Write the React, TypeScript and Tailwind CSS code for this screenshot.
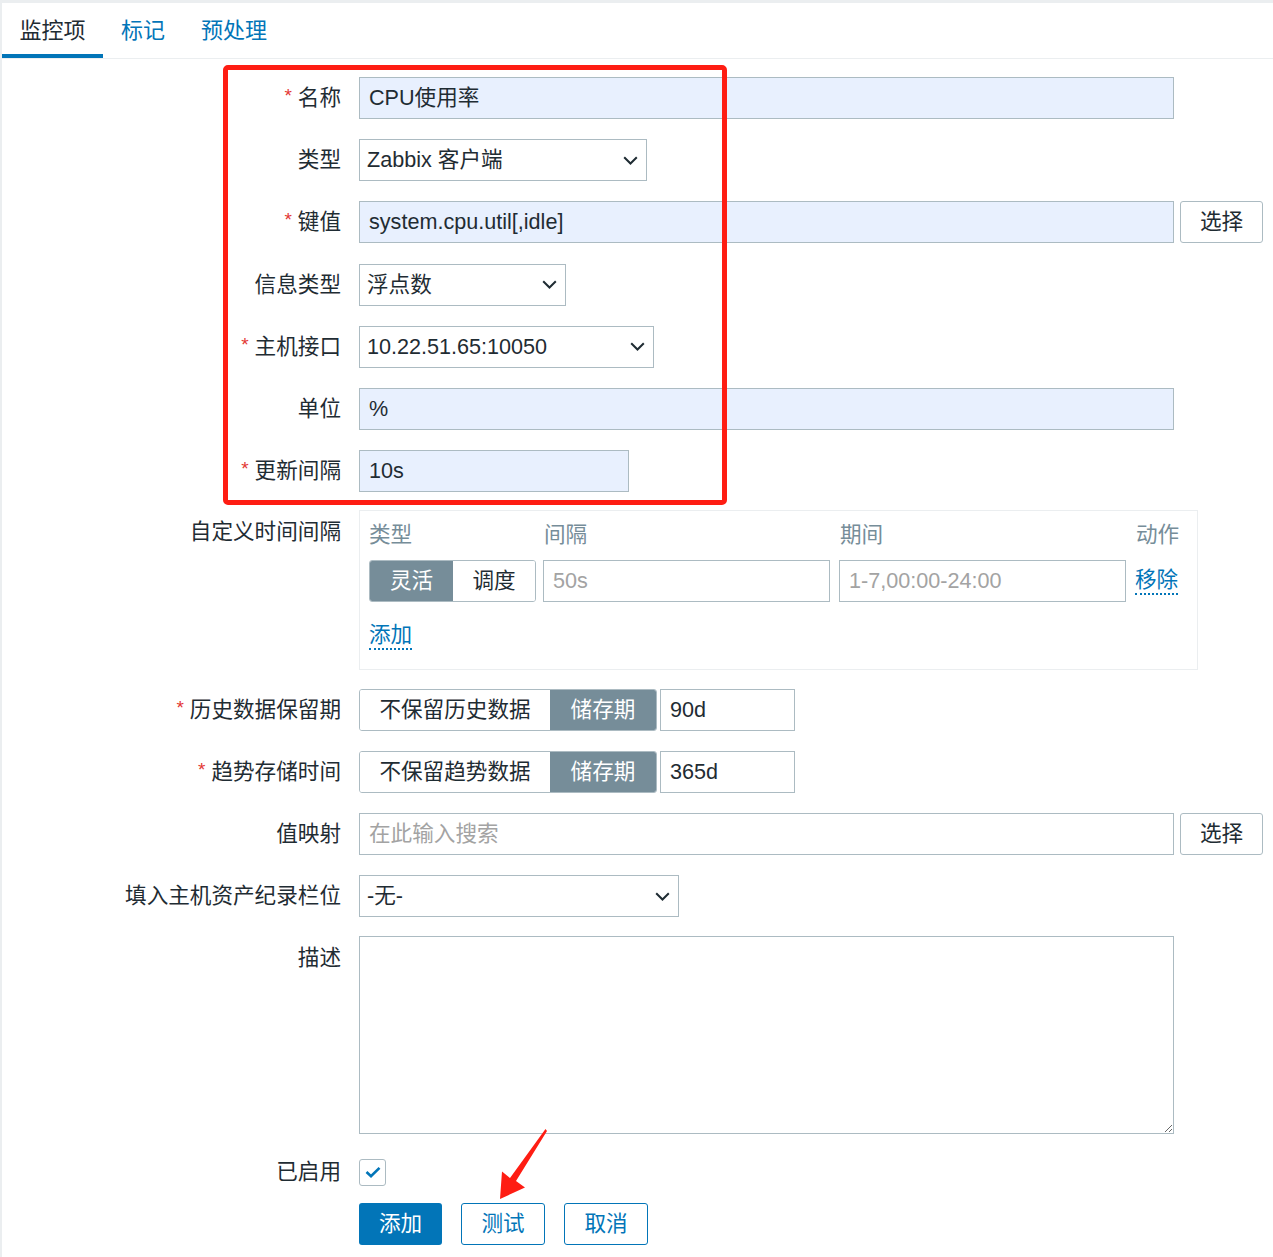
import React from "react";

const FONT = { fontFamily: '"Liberation Sans", Arial, "Noto Sans CJK SC", sans-serif' };

function Chevron() {
  return (
    <svg width="15" height="9" viewBox="0 0 15 9" className="shrink-0">
      <path d="M1.2 1.2 L7.5 7.5 L13.8 1.2" fill="none" stroke="#1f2c33" strokeWidth="2" />
    </svg>
  );
}

function Label({ text, req }: { text: string; req?: boolean }) {
  return (
    <div className="w-[339px] shrink-0 flex items-center justify-end h-[42px] text-[#1f2c33]">
      {req && <span className="text-[#e33734] text-[19px] mr-[6px] -mt-[4px]">*</span>}
      <span>{text}</span>
    </div>
  );
}

function Row({ label, req, children, top }: { label: string; req?: boolean; children: React.ReactNode; top?: boolean }) {
  return (
    <div className={`flex ${top ? "items-start" : "items-center"}`}>
      <Label text={label} req={req} />
      <div className="ml-[18px] flex items-center gap-[6px] flex-1">{children}</div>
    </div>
  );
}

function Input({ w, text, auto = true, placeholder }: { w: string; text?: string; auto?: boolean; placeholder?: string }) {
  return (
    <div
      className={`${w} h-[42px] border border-[#acbbc2] ${auto ? "bg-[#e8f0fe]" : "bg-white"} pl-[9px] flex items-center text-[#1f2c33] shrink-0`}
    >
      {text ? <span>{text}</span> : <span className="text-[#a3a3a3]">{placeholder}</span>}
    </div>
  );
}

function Select({ w, text }: { w: string; text: string }) {
  return (
    <div className={`${w} h-[42px] border border-[#acbbc2] bg-white pl-[7px] pr-[8px] flex items-center justify-between text-[#1f2c33] shrink-0`}>
      <span>{text}</span>
      <Chevron />
    </div>
  );
}

function PickBtn() {
  return (
    <div className="w-[83px] h-[42px] border border-[#acbbc2] rounded-[3px] bg-white flex items-center justify-center text-[#1f2c33] shrink-0">
      选择
    </div>
  );
}

export default function App() {
  return (
    <div className="min-h-[1257px] bg-[#ebeef0] pt-[3px] pl-[2px] relative" style={FONT}>
      <div className="bg-white min-h-[1254px] text-[21.6px] leading-[30px]">
        {/* tabs */}
        <div className="flex h-[56px] border-b border-[#ebeef0]">
          <div className="w-[101px] flex items-center justify-center text-[#1f2c33] border-b-[4px] border-[#0275b8] pt-[4px] text-[22px]">监控项</div>
          <div className="px-[18px] flex items-center text-[#0275b8] border-b-[4px] border-transparent pt-[4px] text-[22px]">标记</div>
          <div className="px-[18px] flex items-center text-[#0275b8] border-b-[4px] border-transparent pt-[4px] text-[22px]">预处理</div>
        </div>

        <div className="pt-[18px] flex flex-col">
          <div className="flex flex-col gap-[20.2px]">
            <Row label="名称" req>
              <Input w="w-[815px]" text="CPU使用率" />
            </Row>
            <Row label="类型">
              <Select w="w-[288px]" text="Zabbix 客户端" />
            </Row>
            <Row label="键值" req>
              <Input w="w-[815px]" text="system.cpu.util[,idle]" />
              <PickBtn />
            </Row>
            <Row label="信息类型">
              <Select w="w-[207px]" text="浮点数" />
            </Row>
            <Row label="主机接口" req>
              <Select w="w-[295px]" text="10.22.51.65:10050" />
            </Row>
            <Row label="单位">
              <Input w="w-[815px]" text="%" />
            </Row>
            <Row label="更新间隔" req>
              <Input w="w-[270px]" text="10s" />
            </Row>
          </div>

          {/* custom intervals */}
          <div className="flex items-start mt-[18px]">
            <div className="w-[339px] shrink-0 flex justify-end pt-[7px] text-[#1f2c33]">自定义时间间隔</div>
            <div className="ml-[18px] w-[839px] h-[160px] border border-[#ebeef0] pl-[9px] pt-[8px]">
              <div className="flex text-[#768d99] h-[32px] items-center">
                <div className="w-[175px]">类型</div>
                <div className="w-[296px]">间隔</div>
                <div className="w-[296px]">期间</div>
                <div>动作</div>
              </div>
              <div className="flex items-center mt-[9px]">
                <div className="flex h-[42px] w-[167px] border border-[#acbbc2] rounded-[3px] overflow-hidden shrink-0">
                  <div className="w-[83px] bg-[#768d99] text-white flex items-center justify-center">灵活</div>
                  <div className="flex-1 bg-white text-[#1f2c33] flex items-center justify-center">调度</div>
                </div>
                <div className="ml-[7px]">
                  <Input w="w-[287px]" auto={false} placeholder="50s" />
                </div>
                <div className="ml-[9px]">
                  <Input w="w-[287px]" auto={false} placeholder="1-7,00:00-24:00" />
                </div>
                <div className="ml-[9px] text-[#0275b8] border-b-2 border-dotted border-[#0275b8] leading-[26px]">移除</div>
              </div>
              <div className="mt-[20px] inline-block text-[#0275b8] border-b-2 border-dotted border-[#0275b8] leading-[26px]">添加</div>
            </div>
          </div>

          <div className="flex flex-col gap-[20px] mt-[19px]">
            <Row label="历史数据保留期" req>
              <div className="flex h-[42px] border border-[#acbbc2] rounded-[3px] overflow-hidden shrink-0">
                <div className="w-[190px] bg-white text-[#1f2c33] flex items-center justify-center">不保留历史数据</div>
                <div className="w-[106px] bg-[#768d99] text-white flex items-center justify-center">储存期</div>
              </div>
              <div className="-ml-[3px]">
                <Input w="w-[135px]" auto={false} text="90d" />
              </div>
            </Row>
            <Row label="趋势存储时间" req>
              <div className="flex h-[42px] border border-[#acbbc2] rounded-[3px] overflow-hidden shrink-0">
                <div className="w-[190px] bg-white text-[#1f2c33] flex items-center justify-center">不保留趋势数据</div>
                <div className="w-[106px] bg-[#768d99] text-white flex items-center justify-center">储存期</div>
              </div>
              <div className="-ml-[3px]">
                <Input w="w-[135px]" auto={false} text="365d" />
              </div>
            </Row>
            <Row label="值映射">
              <Input w="w-[815px]" auto={false} placeholder="在此输入搜索" />
              <PickBtn />
            </Row>
            <Row label="填入主机资产纪录栏位">
              <Select w="w-[320px]" text="-无-" />
            </Row>
            <Row label="描述" top>
              <textarea
                className="w-[815px] h-[198px] -mt-[1px] border border-[#acbbc2] bg-white outline-none"
                readOnly
              />
            </Row>
          </div>

          <div className="flex items-center mt-[23px]">
            <div className="w-[339px] shrink-0 flex justify-end text-[#1f2c33]">已启用</div>
            <div className="ml-[18px] w-[27px] h-[27px] border border-[#acbbc2] rounded-[3px] flex items-center justify-center">
              <svg width="16" height="12" viewBox="0 0 16 12">
                <path d="M1.5 6 L6 10.2 L14.5 1.8" fill="none" stroke="#0275b8" strokeWidth="2.6" />
              </svg>
            </div>
          </div>

          <div className="flex items-center mt-[16px] ml-[357px] gap-[19px] pb-[8px]">
            <div className="w-[83px] h-[42px] rounded-[3px] bg-[#0275b8] text-white flex items-center justify-center">添加</div>
            <div className="w-[84px] h-[42px] rounded-[3px] border border-[#0275b8] bg-white text-[#0275b8] flex items-center justify-center">测试</div>
            <div className="w-[84px] h-[42px] rounded-[3px] border border-[#0275b8] bg-white text-[#0275b8] flex items-center justify-center">取消</div>
          </div>
        </div>
      </div>

      {/* annotation: red frame */}
      <div className="absolute left-[223px] top-[65px] w-[504px] h-[440px] border-[5px] border-[#fe1d13] rounded-[5px] pointer-events-none" />
      {/* annotation: red arrow */}
      <svg className="absolute left-0 top-0 pointer-events-none" width="1273" height="1257">
        <polygon points="545.5,1129 547,1131 516,1181 525,1187.5 500,1199 502,1171.5 510,1178" fill="#fe1d13" />
      </svg>
    </div>
  );
}
